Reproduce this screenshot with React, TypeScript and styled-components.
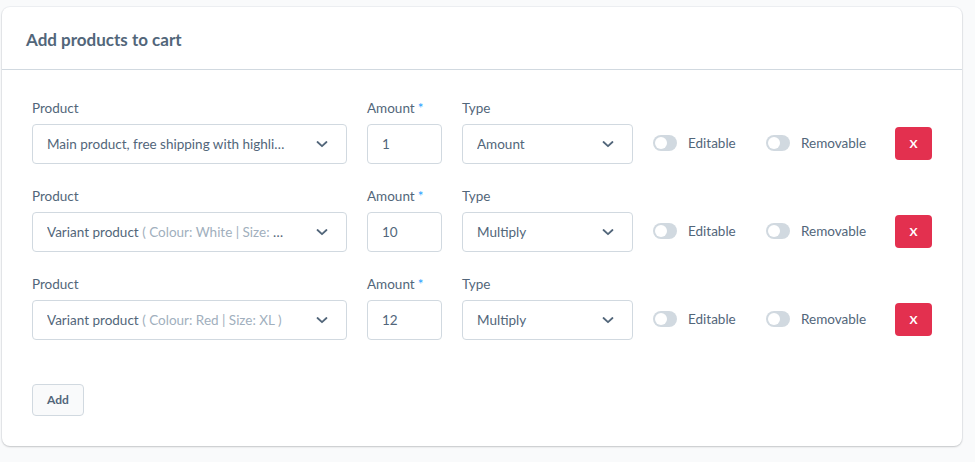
import React from "react";
import styled, { createGlobalStyle } from "styled-components";

const Global = createGlobalStyle`
  html, body { margin: 0; padding: 0; background: #f9fafb; }
  body { font-family: "Source Sans Pro", Lato, "Noto Sans", sans-serif; color: #52667a; }
  * { box-sizing: border-box; }
`;

const Page = styled.div`
  padding: 7px 13px 16px 2px;
`;

const Card = styled.section`
  background: #fff;
  border-radius: 8px;
  box-shadow: 0 1px 2px rgba(0, 0, 0, 0.18), 0 0 0 1px rgba(230, 234, 238, 0.6);
`;

const CardHeader = styled.header`
  height: 63px;
  padding: 0 24px;
  display: flex;
  align-items: center;
  border-bottom: 1px solid #d1d9e0;
`;

const Title = styled.h2`
  margin: 0;
  padding-top: 3px;
  font-size: 17px;
  font-weight: 700;
  color: #52667a;
`;

const CardBody = styled.div`
  padding: 28px 30px 30px 30px;
  display: flex;
  flex-direction: column;
`;

const Row = styled.div`
  display: flex;
  gap: 20px;
  align-items: flex-end;
  margin-bottom: 22px;
`;

const Field = styled.div<{ $w: number }>`
  width: ${(p) => p.$w}px;
  flex: none;
  display: flex;
  flex-direction: column;
`;

const Label = styled.label`
  font-size: 13.5px;
  line-height: 20px;
  height: 20px;
  margin-bottom: 6px;
  color: #52667a;
`;

const Required = styled.span`
  color: #189eff;
  margin-left: 3px;
`;

const Box = styled.div`
  height: 40px;
  border: 1px solid #d1d9e0;
  border-radius: 4px;
  background: #fff;
  display: flex;
  align-items: center;
  padding: 0 14px;
  font-size: 13.5px;
  color: #52667a;
`;

const SelectText = styled.span`
  flex: 1;
  min-width: 0;
  white-space: nowrap;
  overflow: hidden;
  text-overflow: ellipsis;
`;

const Muted = styled.span`
  color: #a1afbd;
`;

const Chevron = styled.svg`
  flex: none;
  width: 12px;
  height: 12px;
  margin-left: 30px;
  margin-right: 4px;
`;

const SwitchWrap = styled.div<{ $w: number }>`
  width: ${(p) => p.$w}px;
  flex: none;
  height: 40px;
  padding-bottom: 3px;
  display: flex;
  align-items: center;
  gap: 11px;
  font-size: 13.5px;
`;

const Switch = styled.span`
  width: 24px;
  height: 16px;
  border-radius: 8px;
  background: #d1d9e0;
  position: relative;
  flex: none;
  &::after {
    content: "";
    position: absolute;
    left: 2px;
    top: 2px;
    width: 12px;
    height: 12px;
    border-radius: 50%;
    background: #fff;
  }
`;

const DeleteBtn = styled.button`
  width: 37px;
  height: 33px;
  margin-bottom: 4px;
  border: none;
  border-radius: 4px;
  background: #e3304f;
  color: #fff;
  font-family: inherit;
  font-size: 12px;
  font-weight: 700;
  padding: 0;
  flex: none;
`;

const AddBtn = styled.button`
  align-self: flex-start;
  margin-top: 22px;
  width: 52px;
  height: 32px;
  border: 1px solid #d1d9e0;
  border-radius: 4px;
  background: #f9fafb;
  color: #52667a;
  font-family: inherit;
  font-size: 12px;
  font-weight: 700;
  padding: 0 0 1px;
`;

const ChevronIcon = () => (
  <Chevron viewBox="0 0 12 12">
    <path d="M1.5 4 L6 8.2 L10.5 4" fill="none" stroke="#52667a" strokeWidth="1.8" strokeLinecap="round" strokeLinejoin="round" />
  </Chevron>
);

type Item = { name: string; detail?: string; amount: string; type: string };

const items: Item[] = [
  { name: "Main product, free shipping with highlighting", amount: "1", type: "Amount" },
  { name: "Variant product", detail: "( Colour: White | Size: XL )", amount: "10", type: "Multiply" },
  { name: "Variant product", detail: "( Colour: Red | Size: XL )", amount: "12", type: "Multiply" },
];

export default function App() {
  return (
    <Page>
      <Global />
      <Card>
        <CardHeader>
          <Title>Add products to cart</Title>
        </CardHeader>
        <CardBody>
          {items.map((it, i) => (
            <Row key={i}>
              <Field $w={315}>
                <Label>Product</Label>
                <Box>
                  <SelectText>
                    {it.name}
                    {it.detail && <Muted> {it.detail}</Muted>}
                  </SelectText>
                  <ChevronIcon />
                </Box>
              </Field>
              <Field $w={75}>
                <Label>
                  Amount<Required>*</Required>
                </Label>
                <Box>{it.amount}</Box>
              </Field>
              <Field $w={171}>
                <Label>Type</Label>
                <Box>
                  <SelectText>{it.type}</SelectText>
                  <ChevronIcon />
                </Box>
              </Field>
              <SwitchWrap $w={93}>
                <Switch />
                Editable
              </SwitchWrap>
              <SwitchWrap $w={109}>
                <Switch />
                Removable
              </SwitchWrap>
              <DeleteBtn>X</DeleteBtn>
            </Row>
          ))}
          <AddBtn>Add</AddBtn>
        </CardBody>
      </Card>
    </Page>
  );
}
